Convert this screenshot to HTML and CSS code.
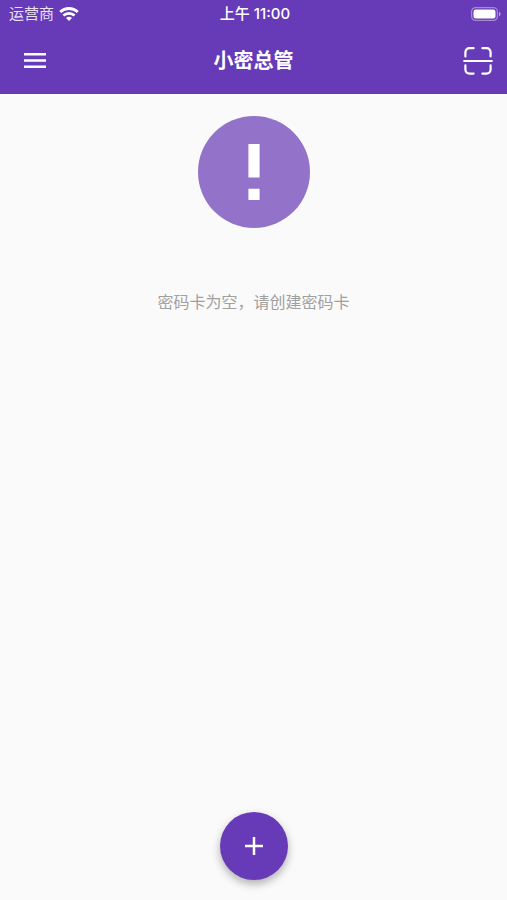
FILE: index.html
```html
<!DOCTYPE html>
<html lang="zh-CN">
<head>
    <meta charset="UTF-8">
    <meta name="viewport" content="width=device-width, initial-scale=1.0">
    <title>小密总管</title>
    <link rel="stylesheet" href="styles.css">
</head>
<body>
<header class="header">
    <div class="status-bar">
        <div class="carrier">
            <span>运营商</span>
            <svg class="wifi" viewBox="0 0 20 14" fill="none" stroke="currentColor" stroke-width="2.8">
                <path d="M1.2 5C6.2.3 13.8.3 18.8 5"/>
                <path d="M4.4 8.5c3.2-2.9 8-2.9 11.2 0"/>
                <path d="M7 11c1.7-1.6 4.3-1.6 6 0l-3 3z" fill="currentColor" stroke="none"/>
            </svg>
        </div>
        <span class="time">上午 11:00</span>
        <svg class="battery" viewBox="0 0 30 14">
            <rect x=".6" y=".6" width="25.8" height="12.8" rx="4" fill="none" stroke="#fff" stroke-opacity=".4" stroke-width="1.2"/>
            <rect x="2.5" y="2.5" width="22" height="9" rx="2.2" fill="#fff"/>
            <path d="M28 4.7c2.2.9 2.2 3.7 0 4.6z" fill="#fff" fill-opacity=".5"/>
        </svg>
    </div>
    <div class="toolbar">
        <button class="icon-btn" aria-label="菜单">
            <svg class="menu-icon" viewBox="0 0 22 16" fill="currentColor">
                <path d="M0 0h22v2.5H0zM0 6.3h22v2.5H0zM0 12.6h22v2.5H0z"/>
            </svg>
        </button>
        <h1>小密总管</h1>
        <button class="icon-btn scan-btn" aria-label="扫一扫">
            <svg class="scan-icon" viewBox="0 0 30 28" fill="none" stroke="currentColor" stroke-width="2.2" stroke-linecap="round">
                <path d="M2.4 9.5V5.2a4 4 0 0 1 4-4h4.2M19.4 1.2h4.2a4 4 0 0 1 4 4v4.3M27.6 18.3v4.3a4 4 0 0 1-4 4h-4.2M10.6 26.6H6.4a4 4 0 0 1-4-4v-4.3M1.2 14h27.6"/>
            </svg>
        </button>
    </div>
</header>

<main class="empty">
    <svg class="empty-icon" viewBox="2 2 20 20">
        <circle cx="12" cy="12" r="10" fill="#9372c9"/>
        <path d="M11 7h2v6h-2zM11 15h2v2h-2z" fill="#fff"/>
    </svg>
    <p>密码卡为空，请创建密码卡</p>
</main>

<button class="fab" aria-label="创建密码卡">
    <svg viewBox="0 0 18 18" fill="none" stroke="currentColor" stroke-width="2.5">
        <path d="M9 0v18M0 9h18"/>
    </svg>
</button>
</body>
</html>
```
FILE: styles.css
```css
:root {
    --primary-color: #673ab7;
    --background: #fafafa;
    --light-text: #a0a0a0;
}

* {
    margin: 0;
    padding: 0;
    box-sizing: border-box;
}

body {
    display: flex;
    flex-direction: column;
    min-height: 100vh;
    font-family: Inter, 'Noto Sans CJK SC', sans-serif;
    background-color: var(--background);
}

svg {
    display: block;
}

button {
    border: none;
    color: white;
    cursor: pointer;
}

.header {
    background-color: var(--primary-color);
    color: white;
}

.status-bar {
    display: grid;
    grid-template-columns: 1fr auto 1fr;
    align-items: center;
    height: 28px;
    padding: 0 6px 0 9px;
    font-size: 15px;
    line-height: 28px;
}

.carrier {
    display: flex;
    align-items: center;
    gap: 5px;
}

.carrier span {
    opacity: 0.85;
}

.wifi {
    width: 20px;
    height: 14px;
}

.time {
    font-weight: 500;
}

.battery {
    width: 30px;
    height: 14px;
    justify-self: end;
}

.toolbar {
    display: grid;
    grid-template-columns: 1fr auto 1fr;
    align-items: center;
    height: 66px;
    padding: 0 5px 0 11px;
}

.icon-btn {
    display: flex;
    align-items: center;
    justify-content: center;
    width: 48px;
    height: 48px;
    background: none;
}

.scan-btn {
    justify-self: end;
}

.menu-icon {
    width: 22px;
    height: 16px;
}

.scan-icon {
    width: 30px;
    height: 28px;
}

h1 {
    margin-right: 6px;
    font-size: 20px;
    font-weight: 700;
    line-height: 28px;
}

.empty {
    flex: 1;
    display: flex;
    flex-direction: column;
    align-items: center;
    gap: 62px;
    padding-top: 22px;
}

.empty-icon {
    width: 112px;
    height: 112px;
}

.empty p {
    color: var(--light-text);
    font-size: 16px;
    line-height: 24px;
}

.fab {
    display: flex;
    align-items: center;
    justify-content: center;
    align-self: center;
    width: 68px;
    height: 68px;
    margin-bottom: 20px;
    border-radius: 50%;
    background-color: var(--primary-color);
    box-shadow: 0 4px 8px rgba(0, 0, 0, 0.3);
}

.fab svg {
    width: 18px;
    height: 18px;
}
```
